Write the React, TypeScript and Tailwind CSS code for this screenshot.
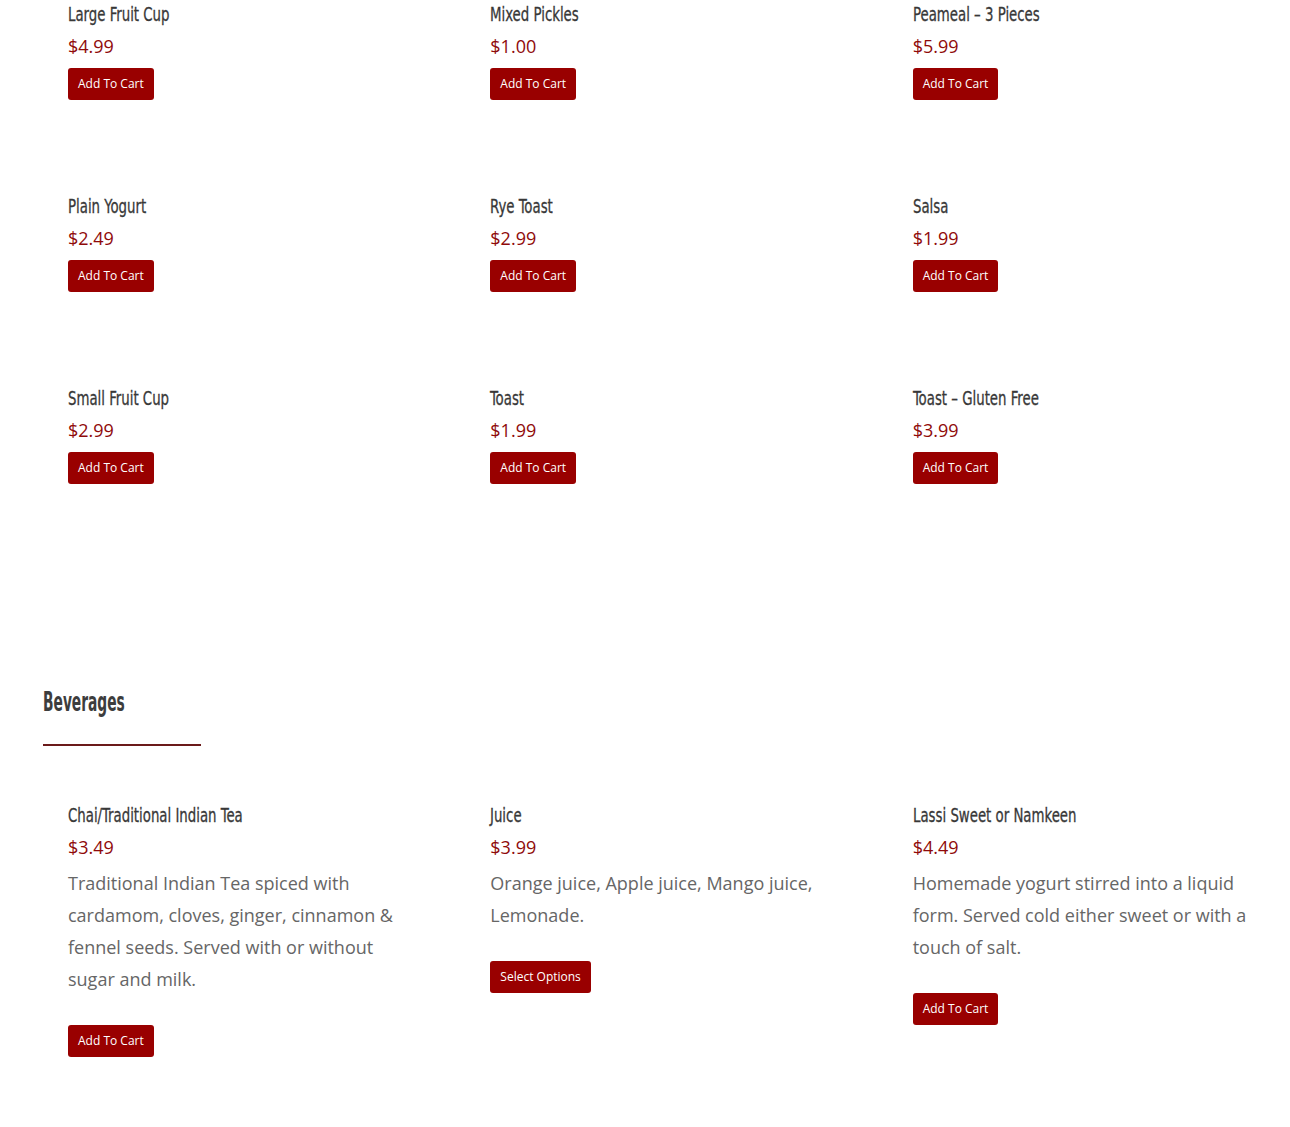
import React from 'react';

type Item = { name: string; price: string; desc?: string; button?: string };

const foods: Item[] = [
  { name: 'Large Fruit Cup', price: '$4.99' },
  { name: 'Mixed Pickles', price: '$1.00' },
  { name: 'Peameal – 3 Pieces', price: '$5.99' },
  { name: 'Plain Yogurt', price: '$2.49' },
  { name: 'Rye Toast', price: '$2.99' },
  { name: 'Salsa', price: '$1.99' },
  { name: 'Small Fruit Cup', price: '$2.99' },
  { name: 'Toast', price: '$1.99' },
  { name: 'Toast – Gluten Free', price: '$3.99' },
];

const beverages: Item[] = [
  {
    name: 'Chai/Traditional Indian Tea',
    price: '$3.49',
    desc: 'Traditional Indian Tea spiced with cardamom, cloves, ginger, cinnamon & fennel seeds. Served with or without sugar and milk.',
  },
  {
    name: 'Juice',
    price: '$3.99',
    desc: 'Orange juice, Apple juice, Mango juice, Lemonade.',
    button: 'Select Options',
  },
  {
    name: 'Lassi Sweet or Namkeen',
    price: '$4.49',
    desc: 'Homemade yogurt stirred into a liquid form. Served cold either sweet or with a touch of salt.',
  },
];

const titleFont = "font-['Liberation_Sans_Narrow','DejaVu_Sans_Condensed',sans-serif]";

function Card({ item }: { item: Item }) {
  return (
    <div className="px-[25px] flex flex-col items-start">
      <h3
        className={`${titleFont} text-[20px] leading-[28px] text-[#383838] whitespace-nowrap scale-x-[0.74] origin-left [-webkit-text-stroke:0.3px_#383838]`}
      >
        {item.name}
      </h3>
      <p className="mt-[4px] text-[18px] leading-[28px] text-[#8f0a0a]">{item.price}</p>
      {item.desc && (
        <p className="mt-[6px] max-w-[345px] text-[18px] leading-[32px] text-[#666666]">{item.desc}</p>
      )}
      <button
        className={`${item.desc ? 'mt-[30px]' : 'mt-[8px]'} h-[32px] px-[10px] rounded-[3px] bg-[#990000] text-white text-[12px] leading-[32px]`}
      >
        {item.button ?? 'Add To Cart'}
      </button>
    </div>
  );
}

export default function App() {
  return (
    <div className="bg-white min-h-[1127px] overflow-x-hidden font-['Open_Sans',sans-serif]">
      <div className="ml-[43px] w-[1267px]">
        <div className="grid grid-cols-3 gap-y-[92px]">
          {foods.map((f) => (
            <Card key={f.name} item={f} />
          ))}
        </div>

        <div className="mt-[200px]">
          <h2
            className={`${titleFont} text-[26px] leading-[36px] text-[#3d3d3d] font-bold whitespace-nowrap scale-x-[0.59] origin-left`}
          >
            Beverages
          </h2>
          <div className="mt-[24px] w-[158px] h-[2px] bg-[#6b1a1a]" />
        </div>

        <div className="mt-[55px] grid grid-cols-3">
          {beverages.map((b) => (
            <Card key={b.name} item={b} />
          ))}
        </div>
      </div>
    </div>
  );
}
